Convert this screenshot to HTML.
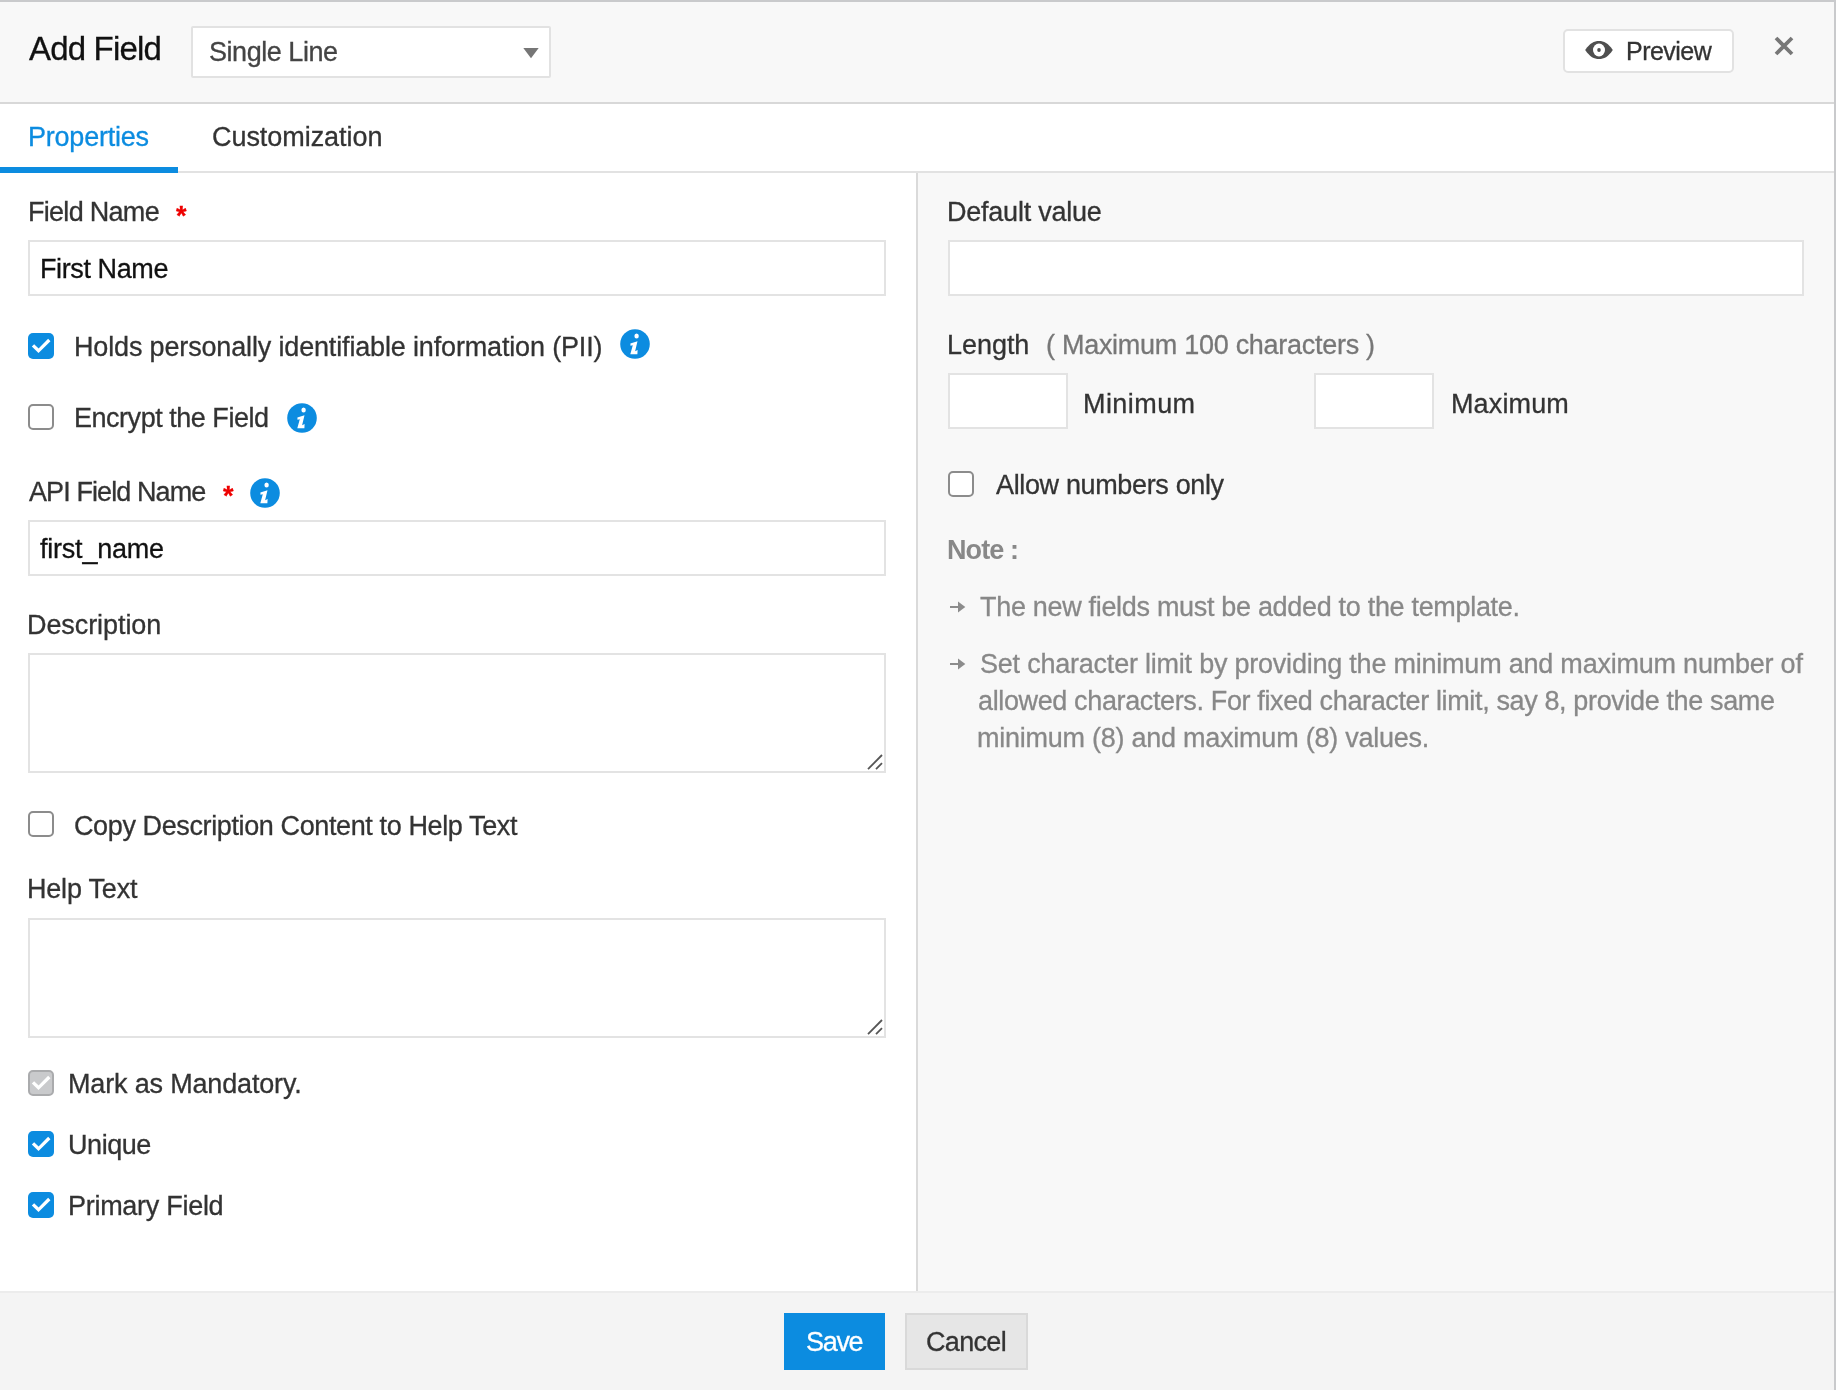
<!DOCTYPE html>
<html><head><meta charset="utf-8"><style>
html,body{margin:0;padding:0;width:1836px;height:1390px;overflow:hidden;background:#fff}
.b{position:absolute;display:block}
.t{will-change:transform;-webkit-text-stroke:0.3px currentColor;position:absolute;white-space:nowrap;font-family:"Liberation Sans",sans-serif}
</style></head><body>
<div class="b" style="left:0px;top:0px;width:1836px;height:102px;background:#f8f8f8"></div>
<div class="b" style="left:0px;top:0px;width:1836px;height:2px;background:#c9cacc"></div>
<div class="b" style="left:0px;top:102px;width:1836px;height:2px;background:#d8d8d8"></div>
<div class="b" style="left:0px;top:104px;width:1836px;height:67px;background:#fff"></div>
<div class="b" style="left:0px;top:171px;width:1836px;height:2px;background:#e2e2e2"></div>
<div class="b" style="left:0px;top:167px;width:178px;height:6px;background:#0c8ce0"></div>
<div class="b" style="left:0px;top:173px;width:916px;height:1118px;background:#fff"></div>
<div class="b" style="left:916px;top:173px;width:2px;height:1118px;background:#dadada"></div>
<div class="b" style="left:918px;top:173px;width:918px;height:1118px;background:#f8f8f8"></div>
<div class="b" style="left:0px;top:1291px;width:1836px;height:99px;background:#f4f4f4"></div>
<div class="b" style="left:0px;top:1291px;width:1836px;height:2px;background:#ececec"></div>
<div class="b" style="left:1834px;top:0px;width:2px;height:1390px;background:#c9cacc"></div>
<div class="b" style="left:191px;top:26px;width:360px;height:52px;box-sizing:border-box;border:2px solid #e2e2e2;background:#fff;border-radius:2px"></div>
<svg class="b" style="left:523px;top:47px" width="16" height="12" viewBox="0 0 16 12"><path d="M0.3 1 L15.7 1 L8 11.2 Z" fill="#767676"/></svg>
<div class="b" style="left:1563px;top:29px;width:171px;height:44px;box-sizing:border-box;border:2px solid #e2e2e2;background:#fff;border-radius:5px"></div>
<svg class="b" style="left:1584px;top:40px" width="30" height="20" viewBox="0 0 30 20"><path d="M1.2 10 C6 3 10 1 15 1 C20 1 24 3 28.8 10 C24 17 20 19 15 19 C10 19 6 17 1.2 10 Z" fill="#4f4f4f"/><ellipse cx="15" cy="10" rx="6" ry="6.5" fill="#fff"/><ellipse cx="15" cy="10" rx="1.8" ry="2" fill="#4f4f4f"/></svg>
<svg class="b" style="left:1772px;top:34px" width="24" height="24" viewBox="0 0 24 24"><path d="M4 4 L20 20 M20 4 L4 20" stroke="#777" stroke-width="3.8"/></svg>
<div class="t" style="left:176px;top:201px;font-size:27px;line-height:30px;color:#e00;font-weight:700">*</div>
<div class="b" style="left:28px;top:240px;width:858px;height:56px;box-sizing:border-box;border:2px solid #e3e3e3;background:#fff;"></div>
<div class="b" style="left:28px;top:333px;width:26px;height:26px;border-radius:5px;background:#0c8ce0;"></div><svg class="b" style="left:28px;top:333px" width="26" height="26" viewBox="0 0 26 26"><path d="M5 12.4 L10.5 17.8 L21.3 7" fill="none" stroke="#fff" stroke-width="3.3"/></svg>
<svg class="b" style="left:620px;top:329px" width="30" height="30" viewBox="0 0 30 30"><circle cx="15" cy="15" r="14.8" fill="#0c8ce0"/><ellipse cx="16.6" cy="6.9" rx="2.2" ry="2.5" fill="#fff"/><path d="M10.4 14.5 L17.5 12.3 L15.1 22.3 L17.6 21.1 L17.4 25.3 L10.3 25.3 L12.8 16.3 L10.5 16.7 Z" fill="#fff"/></svg>
<div class="b" style="left:28px;top:404px;width:26px;height:26px;border-radius:5px;box-sizing:border-box;border:2px solid #8c8c8c;background:#fff"></div>
<svg class="b" style="left:287px;top:403px" width="30" height="30" viewBox="0 0 30 30"><circle cx="15" cy="15" r="14.8" fill="#0c8ce0"/><ellipse cx="16.6" cy="6.9" rx="2.2" ry="2.5" fill="#fff"/><path d="M10.4 14.5 L17.5 12.3 L15.1 22.3 L17.6 21.1 L17.4 25.3 L10.3 25.3 L12.8 16.3 L10.5 16.7 Z" fill="#fff"/></svg>
<div class="t" style="left:223px;top:481px;font-size:27px;line-height:30px;color:#e00;font-weight:700">*</div>
<svg class="b" style="left:250px;top:478px" width="30" height="30" viewBox="0 0 30 30"><circle cx="15" cy="15" r="14.8" fill="#0c8ce0"/><ellipse cx="16.6" cy="6.9" rx="2.2" ry="2.5" fill="#fff"/><path d="M10.4 14.5 L17.5 12.3 L15.1 22.3 L17.6 21.1 L17.4 25.3 L10.3 25.3 L12.8 16.3 L10.5 16.7 Z" fill="#fff"/></svg>
<div class="b" style="left:28px;top:520px;width:858px;height:56px;box-sizing:border-box;border:2px solid #e3e3e3;background:#fff;"></div>
<div class="b" style="left:28px;top:653px;width:858px;height:120px;box-sizing:border-box;border:2px solid #e3e3e3;background:#fff;"></div><svg class="b" style="left:866px;top:753px" width="20" height="20" viewBox="0 0 20 20"><path d="M2 16.2 L16 2" stroke="#555" stroke-width="1.8"/><path d="M10 16.2 L16 10.2" stroke="#555" stroke-width="1.8"/></svg>
<div class="b" style="left:28px;top:811px;width:26px;height:26px;border-radius:5px;box-sizing:border-box;border:2px solid #8c8c8c;background:#fff"></div>
<div class="b" style="left:28px;top:918px;width:858px;height:120px;box-sizing:border-box;border:2px solid #e3e3e3;background:#fff;"></div><svg class="b" style="left:866px;top:1018px" width="20" height="20" viewBox="0 0 20 20"><path d="M2 16.2 L16 2" stroke="#555" stroke-width="1.8"/><path d="M10 16.2 L16 10.2" stroke="#555" stroke-width="1.8"/></svg>
<div class="b" style="left:28px;top:1070px;width:26px;height:26px;border-radius:5px;background:#c9cacc;box-sizing:border-box;border:2px solid #aaabad;"></div><svg class="b" style="left:28px;top:1070px" width="26" height="26" viewBox="0 0 26 26"><path d="M5 12.4 L10.5 17.8 L21.3 7" fill="none" stroke="#fff" stroke-width="3.3"/></svg>
<div class="b" style="left:28px;top:1131px;width:26px;height:26px;border-radius:5px;background:#0c8ce0;"></div><svg class="b" style="left:28px;top:1131px" width="26" height="26" viewBox="0 0 26 26"><path d="M5 12.4 L10.5 17.8 L21.3 7" fill="none" stroke="#fff" stroke-width="3.3"/></svg>
<div class="b" style="left:28px;top:1192px;width:26px;height:26px;border-radius:5px;background:#0c8ce0;"></div><svg class="b" style="left:28px;top:1192px" width="26" height="26" viewBox="0 0 26 26"><path d="M5 12.4 L10.5 17.8 L21.3 7" fill="none" stroke="#fff" stroke-width="3.3"/></svg>
<div class="b" style="left:948px;top:240px;width:856px;height:56px;box-sizing:border-box;border:2px solid #e3e3e3;background:#fff;"></div>
<div class="b" style="left:948px;top:373px;width:120px;height:56px;box-sizing:border-box;border:2px solid #e3e3e3;background:#fff;"></div>
<div class="b" style="left:1314px;top:373px;width:120px;height:56px;box-sizing:border-box;border:2px solid #e3e3e3;background:#fff;"></div>
<div class="b" style="left:948px;top:471px;width:26px;height:26px;border-radius:5px;box-sizing:border-box;border:2px solid #8c8c8c;background:#fff"></div>
<svg class="b" style="left:948px;top:599.3px" width="20" height="16" viewBox="0 0 20 16"><rect x="2" y="7" width="9" height="2" fill="#8c8c8c"/><path d="M10 2.5 L17.3 8 L10 13.5 Z" fill="#8c8c8c"/></svg>
<svg class="b" style="left:948px;top:656.4px" width="20" height="16" viewBox="0 0 20 16"><rect x="2" y="7" width="9" height="2" fill="#8c8c8c"/><path d="M10 2.5 L17.3 8 L10 13.5 Z" fill="#8c8c8c"/></svg>
<div class="b" style="left:784px;top:1313px;width:101px;height:57px;background:#0c8ce0"></div>
<div class="b" style="left:905px;top:1313px;width:123px;height:57px;box-sizing:border-box;border:2px solid #d9d9d9;background:#e6e6e6"></div>
<div class="t" style="left:28.6px;top:31px;font-size:33px;line-height:36px;letter-spacing:-0.825px;color:#111;font-weight:400">Add Field</div>
<div class="t" style="left:209.0px;top:37px;font-size:27px;line-height:30px;letter-spacing:-0.460px;color:#444;font-weight:400">Single Line</div>
<div class="t" style="left:1626.2px;top:37px;font-size:25px;line-height:28px;letter-spacing:-0.533px;color:#333;font-weight:400">Preview</div>
<div class="t" style="left:27.6px;top:122px;font-size:27px;line-height:30px;letter-spacing:-0.222px;color:#0c8ce0;font-weight:400">Properties</div>
<div class="t" style="left:212.2px;top:122px;font-size:27px;line-height:30px;letter-spacing:-0.050px;color:#333;font-weight:400">Customization</div>
<div class="t" style="left:27.8px;top:197px;font-size:27px;line-height:30px;letter-spacing:-0.711px;color:#333;font-weight:400">Field Name</div>
<div class="t" style="left:39.6px;top:254px;font-size:27px;line-height:30px;letter-spacing:-0.400px;color:#111;font-weight:400">First Name</div>
<div class="t" style="left:74.0px;top:332px;font-size:27px;line-height:30px;letter-spacing:-0.157px;color:#333;font-weight:400">Holds personally identifiable information (PII)</div>
<div class="t" style="left:74.0px;top:403px;font-size:27px;line-height:30px;letter-spacing:-0.475px;color:#333;font-weight:400">Encrypt the Field</div>
<div class="t" style="left:28.6px;top:477px;font-size:27px;line-height:30px;letter-spacing:-0.908px;color:#333;font-weight:400">API Field Name</div>
<div class="t" style="left:40.2px;top:534px;font-size:27px;line-height:30px;letter-spacing:-0.222px;color:#111;font-weight:400">first_name</div>
<div class="t" style="left:27.2px;top:610px;font-size:27px;line-height:30px;letter-spacing:-0.080px;color:#333;font-weight:400">Description</div>
<div class="t" style="left:73.6px;top:811px;font-size:27px;line-height:30px;letter-spacing:-0.383px;color:#333;font-weight:400">Copy Description Content to Help Text</div>
<div class="t" style="left:27.0px;top:874px;font-size:27px;line-height:30px;letter-spacing:-0.200px;color:#333;font-weight:400">Help Text</div>
<div class="t" style="left:67.6px;top:1069px;font-size:27px;line-height:30px;letter-spacing:-0.165px;color:#333;font-weight:400">Mark as Mandatory.</div>
<div class="t" style="left:67.6px;top:1130px;font-size:27px;line-height:30px;letter-spacing:-0.440px;color:#333;font-weight:400">Unique</div>
<div class="t" style="left:67.6px;top:1191px;font-size:27px;line-height:30px;letter-spacing:-0.283px;color:#333;font-weight:400">Primary Field</div>
<div class="t" style="left:805.5px;top:1327px;font-size:27px;line-height:30px;letter-spacing:-1.300px;color:#fff;font-weight:400">Save</div>
<div class="t" style="left:926.4px;top:1327px;font-size:27px;line-height:30px;letter-spacing:-0.680px;color:#333;font-weight:400">Cancel</div>
<div class="t" style="left:946.6px;top:197px;font-size:27px;line-height:30px;letter-spacing:-0.233px;color:#333;font-weight:400">Default value</div>
<div class="t" style="left:946.6px;top:330px;font-size:27px;line-height:30px;letter-spacing:-0.040px;color:#333;font-weight:400">Length</div>
<div class="t" style="left:1045.6px;top:330px;font-size:27px;line-height:30px;letter-spacing:-0.280px;color:#777;font-weight:400">( Maximum 100 characters )</div>
<div class="t" style="left:1083.4px;top:389px;font-size:27px;line-height:30px;letter-spacing:0.433px;color:#333;font-weight:400">Minimum</div>
<div class="t" style="left:1450.6px;top:389px;font-size:27px;line-height:30px;letter-spacing:0.133px;color:#333;font-weight:400">Maximum</div>
<div class="t" style="left:995.6px;top:470px;font-size:27px;line-height:30px;letter-spacing:-0.353px;color:#333;font-weight:400">Allow numbers only</div>
<div class="t" style="left:946.6px;top:535px;font-size:27px;line-height:30px;letter-spacing:-0.920px;color:#888;font-weight:700;-webkit-text-stroke:0">Note :</div>
<div class="t" style="left:979.8px;top:592px;font-size:27px;line-height:30px;letter-spacing:-0.314px;color:#888;font-weight:400">The new fields must be added to the template.</div>
<div class="t" style="left:979.8px;top:649px;font-size:27px;line-height:30px;letter-spacing:-0.222px;color:#888;font-weight:400">Set character limit by providing the minimum and maximum number of</div>
<div class="t" style="left:977.8px;top:686px;font-size:27px;line-height:30px;letter-spacing:-0.368px;color:#888;font-weight:400">allowed characters. For fixed character limit, say 8, provide the same</div>
<div class="t" style="left:976.8px;top:723px;font-size:27px;line-height:30px;letter-spacing:-0.247px;color:#888;font-weight:400">minimum (8) and maximum (8) values.</div>
</body></html>
